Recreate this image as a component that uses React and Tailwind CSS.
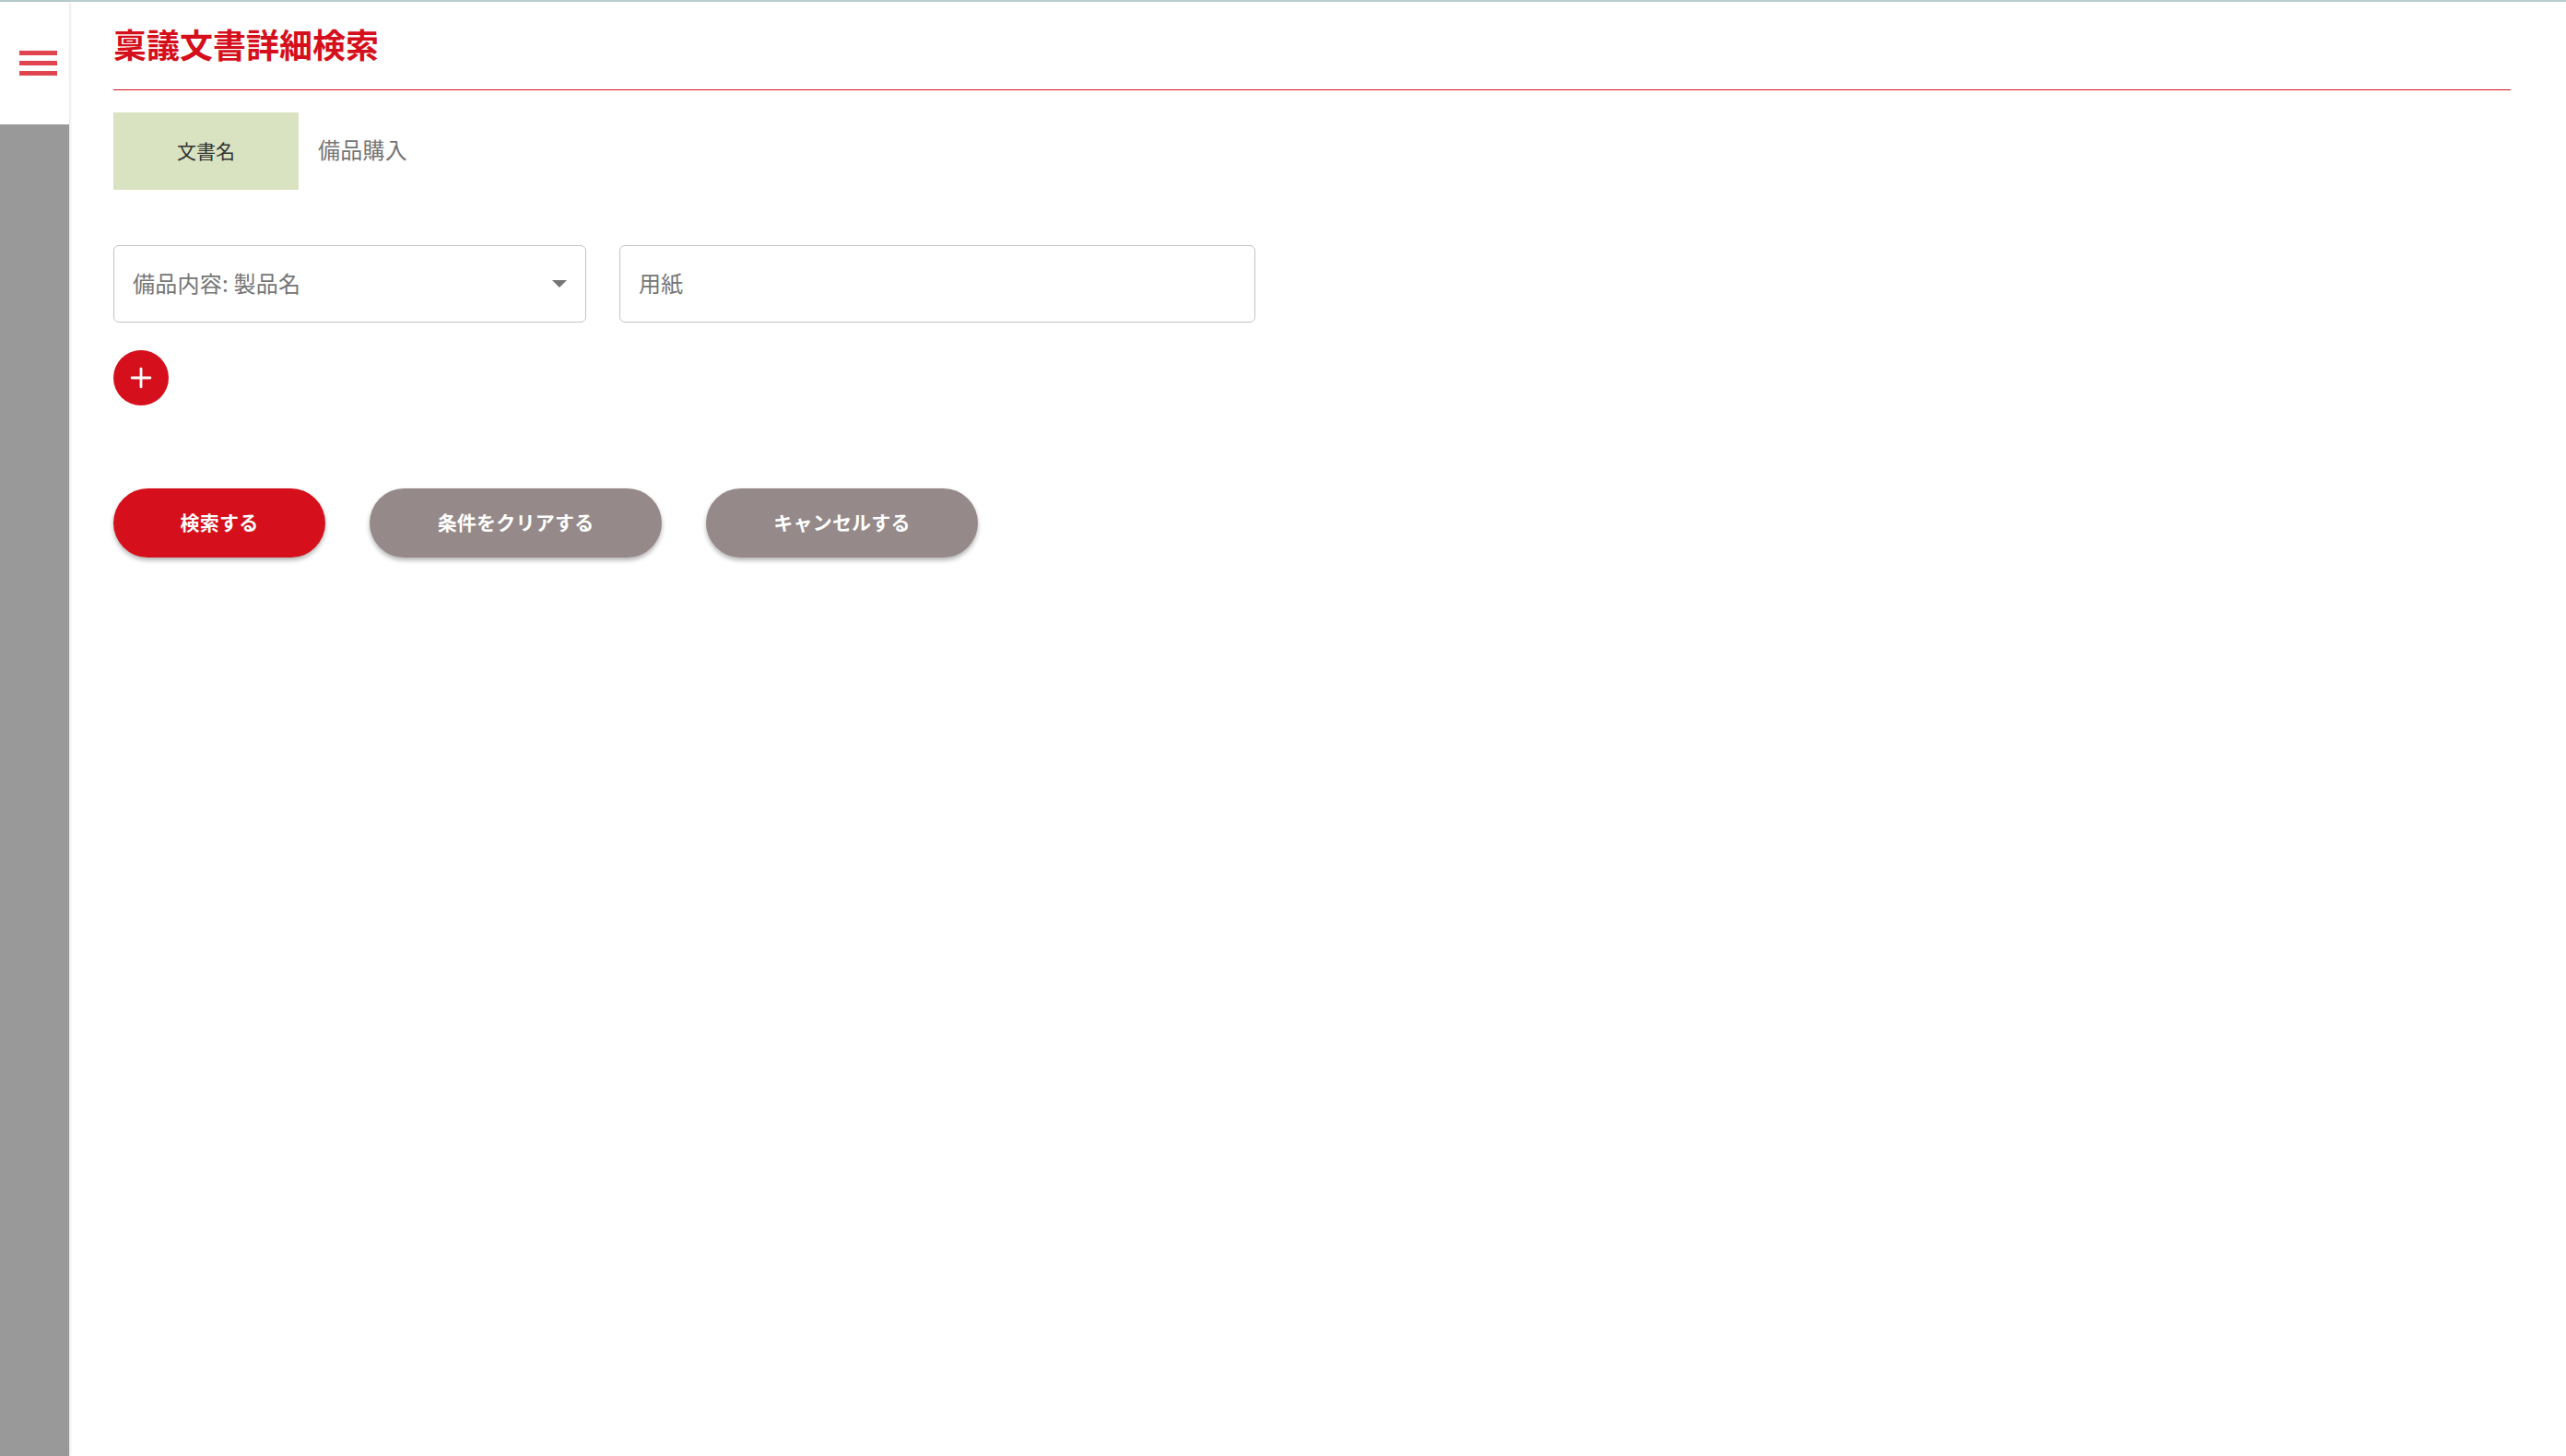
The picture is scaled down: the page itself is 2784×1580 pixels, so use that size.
import { Plus } from 'lucide-react';

const jpFont = "font-['Noto_Sans_CJK_JP','Noto_Sans',sans-serif]";

function MenuButton() {
  return (
    <div className="h-[133px] bg-white pt-[53px] pl-[21px] flex flex-col gap-[6px]">
      <span className="block w-[41px] h-[5px] bg-[#e0444f]" />
      <span className="block w-[41px] h-[5px] bg-[#e0444f]" />
      <span className="block w-[41px] h-[5px] bg-[#e0444f]" />
    </div>
  );
}

function PillButton({ label, className }) {
  return (
    <button className={`h-[75px] pb-[2px] rounded-full text-white text-[21px] font-bold tracking-[0.01em] shadow-[0_3px_5px_rgba(0,0,0,0.3)] ${className}`}>
      {label}
    </button>
  );
}

export default function App() {
  return (
    <div className={`flex flex-col h-screen bg-white overflow-hidden ${jpFont}`}>
      <div className="h-[2px] bg-[#b9cfcf]" />
      <div className="flex flex-1 min-h-0">
        <aside className="w-[75px] flex flex-col bg-[#999999] shadow-[1px_0_3px_rgba(0,0,0,0.12)]">
          <MenuButton />
        </aside>
        <main className="flex-1 pl-[48px] pr-[60px]">
          <div className="h-[96px] border-b border-[#d5101c] pt-[20px]">
            <h1 className="text-[36px] leading-[50px] font-bold text-[#d5101c]">稟議文書詳細検索</h1>
          </div>
          <div className="flex items-center mt-[24px] h-[84px]">
            <div className="w-[201px] h-full pb-[1px] flex items-center justify-center bg-[#d9e3c2] text-[21px] text-[#333333]">文書名</div>
            <div className="ml-[21px] pb-[4px] text-[24px] tracking-[0.01em] text-[#757575]">備品購入</div>
          </div>
          <div className="flex gap-[36px] mt-[60px]">
            <div className="w-[513px] h-[84px] pb-[2px] flex items-center justify-between pl-[20px] pr-[20px] border border-[#c4c4c4] rounded-[6px] text-[24px] tracking-[0.01em] text-[#757575]">
              <span>備品内容: 製品名</span>
              <span className="w-0 h-0 mt-[2px] border-x-[8px] border-x-transparent border-t-[8px] border-t-[#757575]" />
            </div>
            <div className="w-[690px] h-[84px] pb-[2px] flex items-center pl-[20px] border border-[#c4c4c4] rounded-[6px] text-[24px] text-[#757575]">
              用紙
            </div>
          </div>
          <div className="mt-[30px] w-[60px] h-[60px] rounded-full bg-[#d5101c] flex items-center justify-center text-white">
            <Plus size={34} strokeWidth={2} />
          </div>
          <div className="flex gap-[48px] mt-[90px]">
            <PillButton label="検索する" className="w-[230px] bg-[#d5101c]" />
            <PillButton label="条件をクリアする" className="w-[317px] bg-[#958a89]" />
            <PillButton label="キャンセルする" className="w-[295px] bg-[#958a89]" />
          </div>
        </main>
      </div>
    </div>
  );
}
